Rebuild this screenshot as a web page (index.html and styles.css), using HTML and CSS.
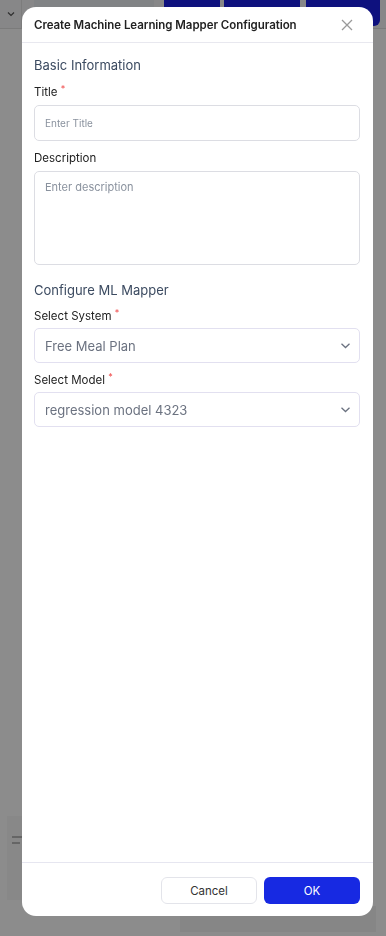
FILE: index.html
```html
<!DOCTYPE html>
<html lang="en">

<head>
  <meta charset="UTF-8">
  <meta name="viewport" content="width=device-width, initial-scale=1.0">
  <title>Create Machine Learning Mapper Configuration</title>
  <link rel="stylesheet" href="styles.css">
</head>

<body>
  <!-- page behind the dialog -->
  <div class="page">
    <div class="toolbar">
      <div class="tb-select">
        <svg width="10" height="10" viewBox="0 0 10 10"><path d="M2 3.5 L5 6.5 L8 3.5" fill="none" stroke="#555" stroke-width="1.2"/></svg>
      </div>
      <div class="tb-search"></div>
      <div class="tb-btn tb-btn-a"></div>
      <div class="tb-btn tb-btn-b"></div>
      <div class="tb-btn tb-btn-c"></div>
    </div>
    <div class="page-body">
      <div class="side-card">
        <span class="side-line"></span>
        <span class="side-line short"></span>
      </div>
      <div class="bottom-panel"></div>
    </div>
  </div>

  <div class="overlay"></div>

  <div class="modal">
    <div class="modal-header">
      <h1 class="modal-title">Create Machine Learning Mapper Configuration</h1>
      <button class="close-btn" type="button" aria-label="Close">
        <svg width="12" height="12" viewBox="0 0 12 12"><path d="M1 1 L11 11 M11 1 L1 11" stroke="#9a9a9a" stroke-width="1.3" fill="none"/></svg>
      </button>
    </div>

    <form class="modal-body">
      <h2 class="section-title">Basic Information</h2>

      <label class="field-label" for="title">Title <span class="req">*</span></label>
      <input class="text-input" type="text" id="title" placeholder="Enter Title">

      <label class="field-label gap-top" for="description">Description</label>
      <textarea class="text-area" id="description" placeholder="Enter description"></textarea>

      <h2 class="section-title section-second">Configure ML Mapper</h2>

      <label class="field-label select-label" for="system">Select System <span class="req">*</span></label>
      <div class="select-box" id="system">
        <span>Free Meal Plan</span>
        <svg width="11" height="11" viewBox="0 0 11 11"><path d="M1.5 3.8 L5.5 7.5 L9.5 3.8" fill="none" stroke="#6b7280" stroke-width="1.3"/></svg>
      </div>

      <label class="field-label select-label gap-top" for="model">Select Model <span class="req">*</span></label>
      <div class="select-box" id="model">
        <span>regression model 4323</span>
        <svg width="11" height="11" viewBox="0 0 11 11"><path d="M1.5 3.8 L5.5 7.5 L9.5 3.8" fill="none" stroke="#6b7280" stroke-width="1.3"/></svg>
      </div>
    </form>

    <div class="modal-footer">
      <button class="btn btn-cancel" type="button">Cancel</button>
      <button class="btn btn-ok" type="button">OK</button>
    </div>
  </div>
</body>
</html>
```

FILE: styles.css
```css
* {
  box-sizing: border-box;
}

body {
  margin: 0;
  font-family: Inter, "Noto Sans", Arial, sans-serif;
  background-color: #ffffff;
  overflow: hidden;
}

/* background page */
.page {
  height: 936px;
  display: flex;
  flex-direction: column;
}

.toolbar {
  display: flex;
  align-items: stretch;
  height: 29px;
  border-bottom: 1px solid #e0e0e0;
  background-color: #f6f6f8;
}

.tb-select {
  width: 22px;
  display: flex;
  align-items: center;
  justify-content: center;
  border-right: 1px solid #e2e2e2;
}

.tb-search {
  width: 120px;
  margin: 0 0 3px 12px;
  background-color: #eceef3;
  border-radius: 0 0 6px 6px;
}

.tb-btn {
  background-color: #1a1fe6;
  border-radius: 0 0 6px 6px;
  margin-bottom: 2px;
}

.tb-btn-a {
  width: 56px;
  margin-left: 10px;
}

.tb-btn-b {
  width: 76px;
  margin-left: 4px;
}

.tb-btn-c {
  width: 74px;
  margin-left: 6px;
}

.page-body {
  flex: 1;
  display: flex;
  flex-direction: column;
  justify-content: flex-end;
  padding: 0 10px 0 7px;
}

.side-card {
  width: 160px;
  height: 84px;
  margin-bottom: 6px;
  background-color: #f8f8f8;
  padding: 20px 0 0 5px;
  display: flex;
  flex-direction: column;
  gap: 4px;
}

.side-line {
  display: block;
  width: 10px;
  height: 2px;
  background-color: #b8b8b8;
}

.side-line.short {
  width: 8px;
}

.bottom-panel {
  height: 26px;
  margin-left: 173px;
  background-color: #f4f4f4;
  margin-bottom: 4px;
}

.overlay {
  position: fixed;
  inset: 0;
  background-color: rgba(0, 0, 0, 0.45);
}

/* dialog */
.modal {
  position: fixed;
  top: 7px;
  left: 22px;
  width: 351px;
  height: 909px;
  background-color: #ffffff;
  border-radius: 14px;
  display: flex;
  flex-direction: column;
  overflow: hidden;
}

.modal-header {
  height: 36px;
  display: flex;
  align-items: center;
  justify-content: space-between;
  padding: 0 20px 0 12px;
  border-bottom: 1px solid #e8e8ef;
}

.modal-title {
  margin: 0;
  font-size: 11.5px;
  font-weight: 600;
  color: #222;
  letter-spacing: -0.05px;
}

.close-btn {
  border: none;
  background: none;
  padding: 0;
  display: flex;
  cursor: pointer;
}

.modal-body {
  flex: 1;
  display: flex;
  flex-direction: column;
  padding: 13px 13px 0 12px;
}

.section-title {
  margin: 0 0 10px;
  font-size: 13px;
  line-height: 18px;
  font-weight: 400;
  color: #3b4a60;
}

.section-second {
  margin-top: 16px;
  margin-bottom: 9px;
}

.field-label {
  display: block;
  font-size: 11.5px;
  line-height: 16px;
  color: #222;
  margin-bottom: 5px;
}

.select-label {
  margin-bottom: 4px;
}

.gap-top {
  margin-top: 9px;
}

.req {
  color: #ef4444;
  font-size: 9px;
  vertical-align: top;
  position: relative;
  top: -3px;
}

.text-input,
.text-area {
  width: 100%;
  border: 1px solid #dcdde3;
  border-radius: 5px;
  font-family: inherit;
  color: #333;
  background-color: #fff;
}

.text-input {
  height: 36px;
  padding: 0 10px;
  font-size: 10px;
}

.text-area {
  height: 94px;
  padding: 8px 10px;
  font-size: 11px;
  resize: none;
}

.text-input::placeholder,
.text-area::placeholder {
  color: #8a929e;
}

.select-box {
  height: 35px;
  display: flex;
  align-items: center;
  justify-content: space-between;
  padding: 0 8px 0 10px;
  border: 1px solid #e2e0f0;
  border-radius: 5px;
  font-size: 13px;
  color: #6b7280;
}

.modal-footer {
  height: 54px;
  display: flex;
  justify-content: flex-end;
  gap: 7px;
  padding: 14px 13px 0 0;
  border-top: 1px solid #e6e6f0;
}

.btn {
  width: 96px;
  height: 27px;
  border-radius: 6px;
  font-family: inherit;
  font-size: 11.5px;
  cursor: pointer;
}

.btn-cancel {
  background-color: #fff;
  border: 1px solid #e3e4ea;
  color: #333;
}

.btn-ok {
  background-color: #1729e2;
  border: none;
  color: #fff;
}
```
